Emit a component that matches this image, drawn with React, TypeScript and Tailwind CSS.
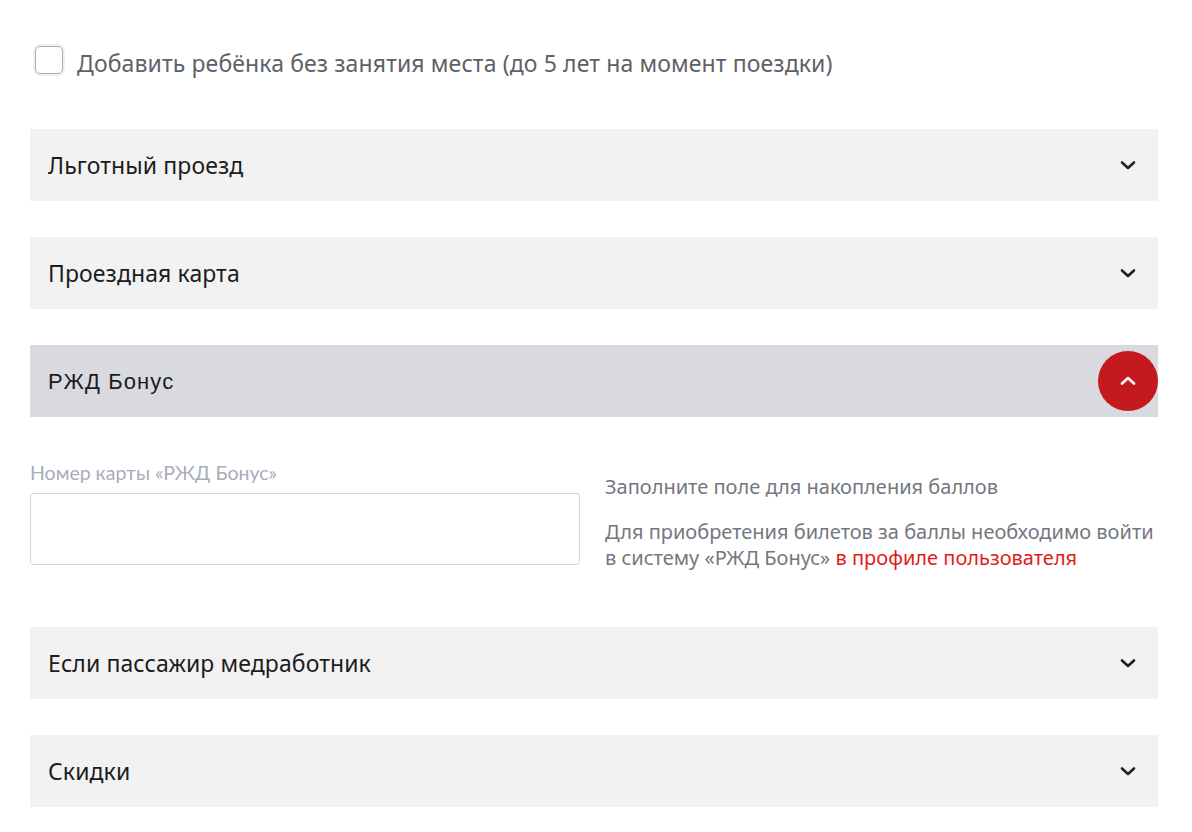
import { useState } from "react";

type Section = {
  id: string;
  title: string;
};

const TOP_SECTIONS: Section[] = [
  { id: "lgota", title: "Льготный проезд" },
  { id: "card", title: "Проездная карта" },
];

const BOTTOM_SECTIONS: Section[] = [
  { id: "med", title: "Если пассажир медработник" },
  { id: "sale", title: "Скидки" },
];

const PLEX = "font-['Noto_Sans',Inter,sans-serif]";

function ChevronDown() {
  return (
    <svg width="18" height="12" viewBox="0 0 18 12" fill="none">
      <path
        d="M3 3.5 9 9l6-5.5"
        stroke="#1f1f1f"
        strokeWidth="2.6"
        strokeLinecap="round"
        strokeLinejoin="round"
      />
    </svg>
  );
}

function ChevronUp() {
  return (
    <svg width="18" height="12" viewBox="0 0 18 12" fill="none">
      <path
        d="M3 8.5 9 3l6 5.5"
        stroke="#ffffff"
        strokeWidth="2.6"
        strokeLinecap="round"
        strokeLinejoin="round"
      />
    </svg>
  );
}

function ClosedRow({ title }: { title: string }) {
  return (
    <button
      type="button"
      className="flex h-[72px] w-full items-center justify-between bg-[#f2f2f2] pl-[18px] pr-[21px] text-left"
    >
      <span className={`${PLEX} text-[23px] tracking-[0.1px] text-[#1c1c1e]`}>{title}</span>
      <ChevronDown />
    </button>
  );
}

export default function App() {
  const [child, setChild] = useState(false);
  const [card, setCard] = useState("");

  return (
    <div className="min-h-[832px] w-[1192px] bg-white pl-[30px] pr-[34px] pt-[44px]">
      <label className="ml-[3px] flex h-[32px] cursor-pointer items-center gap-[12px]">
        <span className="flex h-[32px] w-[32px] items-center justify-center rounded-[7px] bg-[#eef0f3] p-[2px]">
          <span className="h-full w-full rounded-[5px] border-[1.5px] border-[#a6adba] bg-white">
            <input
              type="checkbox"
              checked={child}
              onChange={(e) => setChild(e.target.checked)}
              className="hidden"
            />
          </span>
        </span>
        <span className={`${PLEX} mt-[6px] text-[23px] leading-[32px] tracking-[0.12px] text-[#5d6169]`}>
          Добавить ребёнка без занятия места (до 5 лет на момент поездки)
        </span>
      </label>

      <div className="mt-[53px] flex flex-col gap-[36px]">
        {TOP_SECTIONS.map((s) => (
          <ClosedRow key={s.id} title={s.title} />
        ))}

        <div>
          <div className="flex h-[72px] items-center justify-between bg-[#d9dadf] pl-[18px]">
            <span className="font-['Liberation_Sans',Arial,sans-serif] text-[22px] tracking-[1.1px] text-[#1c1c1e]">
              РЖД Бонус
            </span>
            <button
              type="button"
              className="flex h-[60px] w-[60px] items-center justify-center rounded-full bg-[#c41a1d]"
            >
              <ChevronUp />
            </button>
          </div>

          <div className="mt-[45px] flex items-start gap-[25px] pb-[20px]">
            <div className="w-[550px] shrink-0">
              <div className="font-['Lato',sans-serif] text-[19.5px] leading-[22px] text-[#a7adb9]">
                Номер карты «РЖД Бонус»
              </div>
              <input
                value={card}
                onChange={(e) => setCard(e.target.value)}
                className="mt-[9px] h-[72px] w-full rounded-[3px] border border-[#d7d7d7] px-4 outline-none"
              />
            </div>
            <div className={`${PLEX} flex-1 pt-[12px] text-[20px] leading-[26px] text-[#737780]`}>
              <p>Заполните поле для накопления баллов</p>
              <p className="mt-[19px]">
                Для приобретения билетов за баллы необходимо войти в систему «РЖД Бонус»{" "}
                <a href="#" className="text-[#e21a1a]">
                  в профиле пользователя
                </a>
              </p>
            </div>
          </div>
        </div>

        {BOTTOM_SECTIONS.map((s) => (
          <ClosedRow key={s.id} title={s.title} />
        ))}
      </div>
    </div>
  );
}
